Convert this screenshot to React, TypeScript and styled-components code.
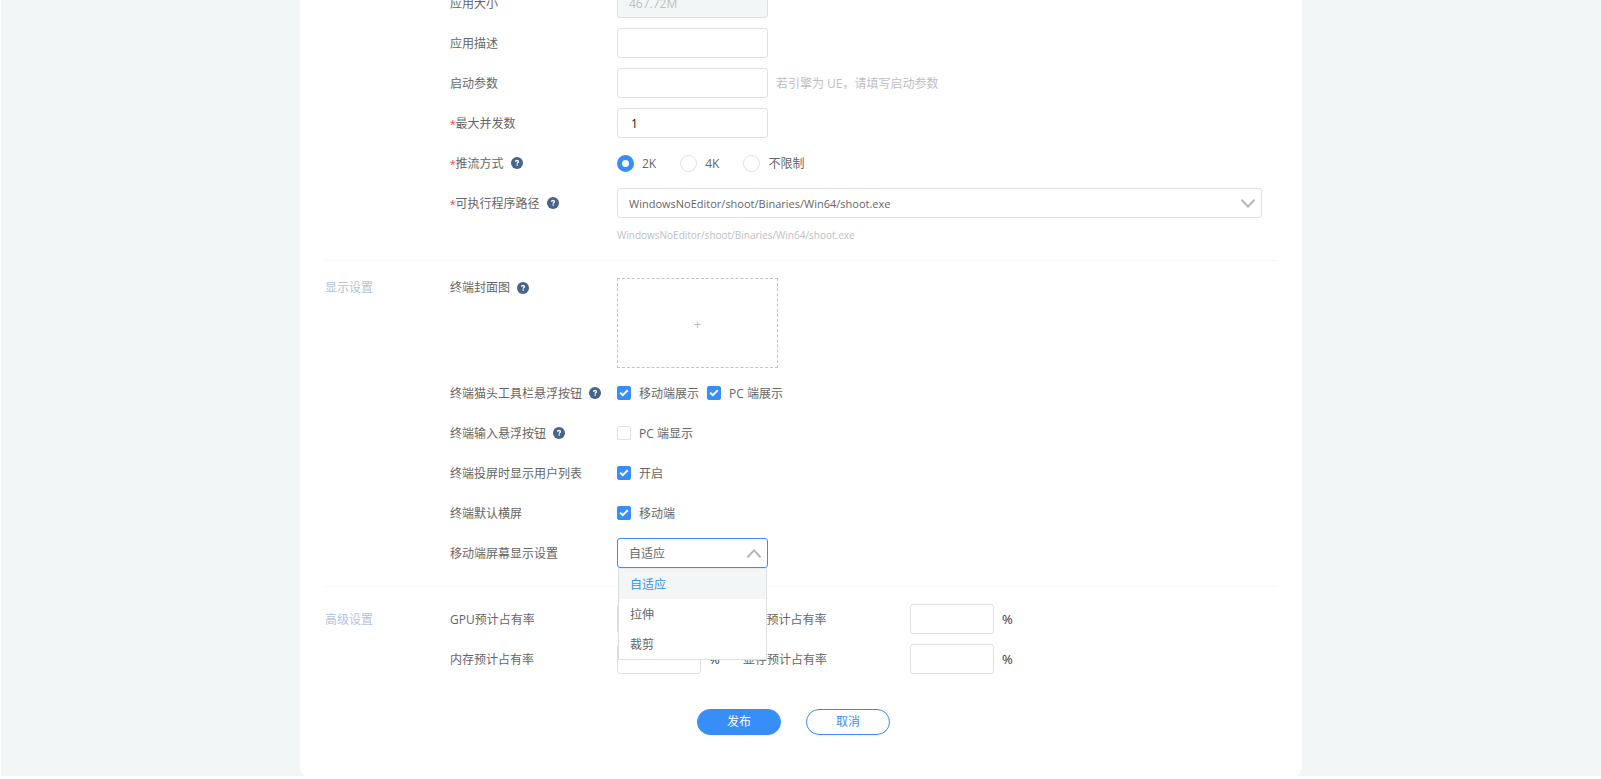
import React, { ReactNode, useId, useState } from "react";
import styled, { createGlobalStyle, css } from "styled-components";

const color = {
  page: "#f2f6f7",
  blue: "#378ef7",
  text: "#666666",
  muted: "#bcc0c4",
  section: "#b4c2d8",
  border: "#dedfe1",
  line: "#f6f7f7",
  help: "#46648c",
};

const GlobalStyle = createGlobalStyle`
  * { box-sizing: border-box; }
  body {
    margin: 0;
    background: #fff;
    overflow: hidden;
    font: 12px/18px "Open Sans", "Noto Sans CJK SC", sans-serif;
    color: ${color.text};
  }
  button, input, select { font: inherit; color: inherit; margin: 0; }
`;

const Page = styled.main`
  margin-left: 1px;
  background: ${color.page};
  overflow: hidden;
`;

const Card = styled.form`
  max-width: 1002px;
  margin: -12px auto 0;
  padding: 0 24px 41px 25px;
  background: #fff;
  border-radius: 0 0 8px 8px;
`;

const Section = styled.section`
  display: grid;
  grid-template-columns: 125px minmax(0, 1fr);
  padding: 17px 0 18px;
  border-bottom: 1px solid ${color.line};
  &:first-child { padding: 0 0 19px; }
  &:last-of-type { border-bottom: 0; padding-bottom: 0; }
`;

const SectionTitle = styled.h2<{ $tall?: boolean }>`
  margin: 0;
  font-size: 12px;
  font-weight: 400;
  line-height: ${(p) => (p.$tall ? 32 : 20)}px;
  color: ${color.section};
`;

const Rows = styled.div`
  display: grid;
  gap: 10px;
  grid-column: 2;
`;

const RowBox = styled.div<{ $top?: boolean }>`
  display: grid;
  grid-template-columns: 167px minmax(0, 1fr);
  align-items: ${(p) => (p.$top ? "start" : "center")};
  min-height: 30px;
`;

const Label = styled.label`
  display: flex;
  align-items: center;
  gap: 7px;
  line-height: 20px;
  white-space: nowrap;
`;

const LabelText = styled.span<{ $low?: boolean }>`
  padding-top: ${(p) => (p.$low ? 2 : 0)}px;
`;

const Star = styled.span`
  font-size: 10px;
  color: #f33;
`;

const HelpMark = styled.svg`
  width: 12px;
  height: 12px;
  fill: ${color.help};
`;

const Controls = styled.div<{ $gap?: number }>`
  display: flex;
  align-items: center;
  gap: ${(p) => p.$gap ?? 8}px;
`;

const field = css`
  height: 30px;
  padding: 1px 11px 0;
  border: 1px solid ${color.border};
  border-radius: 3px;
  background: #fff;
  outline: none;
`;

const TextInput = styled.input<{ $small?: boolean }>`
  ${field}
  width: ${(p) => (p.$small ? 84 : 151)}px;
  color: #111;
  &[inputmode="numeric"] { padding: 0 13px; }
  &:disabled { background: ${color.page}; color: ${color.muted}; }
`;

const Note = styled.span`
  padding-top: 2px;
  color: ${color.muted};
`;

const PathNote = styled.p`
  margin: 0;
  padding: 1px 0 0 167px;
  font-size: 10px;
  line-height: 12px;
  color: ${color.muted};
`;

const SelectBox = styled.div<{ $wide?: boolean }>`
  position: relative;
  width: ${(p) => (p.$wide ? "auto" : "151px")};
  margin-right: ${(p) => (p.$wide ? 16 : 0)}px;
`;

const Select = styled.select<{ $open?: boolean; $path?: boolean }>`
  ${field}
  display: block;
  width: 100%;
  padding-right: 30px;
  appearance: none;
  font-size: ${(p) => (p.$path ? 11 : 12)}px;
  border-color: ${(p) => (p.$open ? color.blue : color.border)};
`;

const Chevron = styled.svg<{ $up?: boolean }>`
  position: absolute;
  right: 7px;
  top: 11px;
  width: 14px;
  height: 9px;
  transform: ${(p) => (p.$up ? "scaleY(-1)" : "none")};
  fill: none;
  stroke: #b2b7bf;
  stroke-width: 2;
  stroke-linecap: round;
  pointer-events: none;
`;

const Menu = styled.ul`
  position: absolute;
  z-index: 1;
  top: 100%;
  left: 1px;
  right: 1px;
  margin: 0;
  padding: 0;
  list-style: none;
  background: #fff;
  border: 1px solid ${color.border};
  border-top-color: #e8ebed;
`;

const MenuItem = styled.li<{ $active?: boolean }>`
  padding: 1px 11px 0;
  line-height: 29px;
  color: ${(p) => (p.$active ? color.blue : color.text)};
  background: ${(p) => (p.$active ? color.page : "#fff")};
`;

const Choice = styled.label`
  display: flex;
  align-items: center;
  gap: 8px;
`;

const ChoiceText = styled.span`
  padding-top: 2px;
`;

const Radio = styled.input.attrs({ type: "radio" })`
  appearance: none;
  width: 17px;
  height: 17px;
  border: 1px solid ${color.border};
  border-radius: 50%;
  background: #fff;
  &:checked { border: 5px solid ${color.blue}; }
`;

const CheckBox = styled.span`
  display: grid;
  > * { grid-area: 1 / 1; }
  svg {
    width: 14px;
    height: 14px;
    fill: none;
    stroke: #fff;
    stroke-width: 2;
    pointer-events: none;
  }
`;

const CheckInput = styled.input.attrs({ type: "checkbox" })`
  appearance: none;
  width: 14px;
  height: 14px;
  border: 1px solid ${color.border};
  border-radius: 2px;
  background: #fff;
  &:checked { background: ${color.blue}; border-color: ${color.blue}; }
`;

const Upload = styled.button`
  width: 161px;
  height: 90px;
  padding: 3px 0 0;
  border: 1px dashed #c3c4ca;
  background: #fff;
  color: #b4b7bd;
`;

const RateRow = styled.div`
  display: grid;
  grid-template-columns: 167px 126px 167px minmax(0, 1fr);
  align-items: center;
`;

const Percent = styled.span`
  font-size: 13px;
  color: #333;
`;

const Actions = styled.footer`
  display: flex;
  gap: 25px;
  padding: 35px 0 0 372px;
`;

const Button = styled.button<{ $primary?: boolean }>`
  width: 84px;
  height: 26px;
  padding: 0;
  border: 1px solid ${color.blue};
  border-radius: 13px;
  background: ${(p) => (p.$primary ? color.blue : "#fff")};
  color: ${(p) => (p.$primary ? "#fff" : color.blue)};
`;

interface RowProps {
  label: string;
  required?: boolean;
  help?: boolean;
  top?: boolean;
  children: (id: string) => ReactNode;
}

function HelpIcon() {
  return (
    <HelpMark viewBox="0 0 12 12" aria-hidden>
      <circle cx="6" cy="6" r="6" />
      <path
        d="M4.5 4.8C4.5 3.9 5.1 3.5 6 3.5S7.5 4 7.5 4.7C7.5 5.6 6.2 5.6 6.2 6.7"
        fill="none"
        stroke="#fff"
        strokeWidth="1.3"
      />
      <rect x="5.5" y="7.4" width="1.4" height="1.3" fill="#fff" />
    </HelpMark>
  );
}

function Row({ label, required, help, top, children }: RowProps) {
  const id = useId();
  return (
    <RowBox $top={top}>
      <Label htmlFor={id}>
        <LabelText $low={!top}>
          {required && <Star>*</Star>}
          {label}
        </LabelText>
        {help && <HelpIcon />}
      </Label>
      {children(id)}
    </RowBox>
  );
}

function RadioChoice({ id, text, on }: { id?: string; text: string; on?: boolean }) {
  return (
    <Choice>
      <Radio id={id} name="stream" defaultChecked={on} />
      <ChoiceText>{text}</ChoiceText>
    </Choice>
  );
}

function Check({ id, text, on }: { id?: string; text: string; on?: boolean }) {
  const [checked, setChecked] = useState(!!on);
  return (
    <Choice>
      <CheckBox>
        <CheckInput id={id} checked={checked} onChange={(e) => setChecked(e.target.checked)} />
        {checked && (
          <svg viewBox="0 0 14 14" aria-hidden>
            <path d="M3.2 6.6 5.8 9.2 10.8 4.2" />
          </svg>
        )}
      </CheckBox>
      <ChoiceText>{text}</ChoiceText>
    </Choice>
  );
}

function Arrow({ up }: { up?: boolean }) {
  return (
    <Chevron $up={up} viewBox="0 0 14 9" aria-hidden>
      <path d="M1 1.2 7 7.6 13 1.2" />
    </Chevron>
  );
}

function Rate({ label }: { label: string }) {
  const id = useId();
  return (
    <>
      <Label htmlFor={id}>
        <LabelText $low>{label}</LabelText>
      </Label>
      <Controls>
        <TextInput id={id} $small />
        <Percent>%</Percent>
      </Controls>
    </>
  );
}

const exePath = "WindowsNoEditor/shoot/Binaries/Win64/shoot.exe";
const fitModes = ["自适应", "拉伸", "裁剪"];

export default function App() {
  const [mode, setMode] = useState(fitModes[0]);
  const [open, setOpen] = useState(true);
  const pick = (m: string) => {
    setMode(m);
    setOpen(false);
  };

  return (
    <Page>
      <GlobalStyle />
      <Card onSubmit={(e) => e.preventDefault()}>
        <Section>
          <Rows>
            <Row label="应用大小">{(id) => <TextInput id={id} disabled defaultValue="467.72M" />}</Row>
            <Row label="应用描述">{(id) => <TextInput id={id} />}</Row>
            <Row label="启动参数">
              {(id) => (
                <Controls>
                  <TextInput id={id} />
                  <Note>若引擎为 UE，请填写启动参数</Note>
                </Controls>
              )}
            </Row>
            <Row label="最大并发数" required>
              {(id) => <TextInput id={id} inputMode="numeric" defaultValue="1" />}
            </Row>
            <Row label="推流方式" required help>
              {(id) => (
                <Controls $gap={24}>
                  <RadioChoice id={id} text="2K" on />
                  <RadioChoice text="4K" />
                  <RadioChoice text="不限制" />
                </Controls>
              )}
            </Row>
            <Row label="可执行程序路径" required help>
              {(id) => (
                <SelectBox $wide>
                  <Select id={id} $path><option>{exePath}</option></Select>
                  <Arrow />
                </SelectBox>
              )}
            </Row>
            <PathNote>{exePath}</PathNote>
          </Rows>
        </Section>

        <Section>
          <SectionTitle>显示设置</SectionTitle>
          <Rows>
            <Row label="终端封面图" help top>{(id) => <Upload id={id} type="button">+</Upload>}</Row>
            <Row label="终端猫头工具栏悬浮按钮" help>
              {(id) => (
                <Controls>
                  <Check id={id} text="移动端展示" on />
                  <Check text="PC 端展示" on />
                </Controls>
              )}
            </Row>
            <Row label="终端输入悬浮按钮" help>{(id) => <Check id={id} text="PC 端显示" />}</Row>
            <Row label="终端投屏时显示用户列表">{(id) => <Check id={id} text="开启" on />}</Row>
            <Row label="终端默认横屏">{(id) => <Check id={id} text="移动端" on />}</Row>
            <Row label="移动端屏幕显示设置">
              {(id) => (
                <SelectBox>
                  <Select
                    id={id}
                    $open={open}
                    value={mode}
                    onMouseDown={(e) => {
                      e.preventDefault();
                      setOpen(!open);
                    }}
                    onChange={(e) => pick(e.target.value)}
                  >
                    {fitModes.map((m) => <option key={m}>{m}</option>)}
                  </Select>
                  <Arrow up={open} />
                  {open && (
                    <Menu role="listbox">
                      {fitModes.map((m) => (
                        <MenuItem key={m} role="option" aria-selected={m === mode} $active={m === mode} onClick={() => pick(m)}>
                          {m}
                        </MenuItem>
                      ))}
                    </Menu>
                  )}
                </SelectBox>
              )}
            </Row>
          </Rows>
        </Section>

        <Section>
          <SectionTitle $tall>高级设置</SectionTitle>
          <Rows>
            <RateRow>
              <Rate label="GPU预计占有率" />
              <Rate label="CPU预计占有率" />
            </RateRow>
            <RateRow>
              <Rate label="内存预计占有率" />
              <Rate label="显存预计占有率" />
            </RateRow>
          </Rows>
        </Section>

        <Actions>
          <Button type="submit" $primary>发布</Button>
          <Button type="button">取消</Button>
        </Actions>
      </Card>
    </Page>
  );
}
